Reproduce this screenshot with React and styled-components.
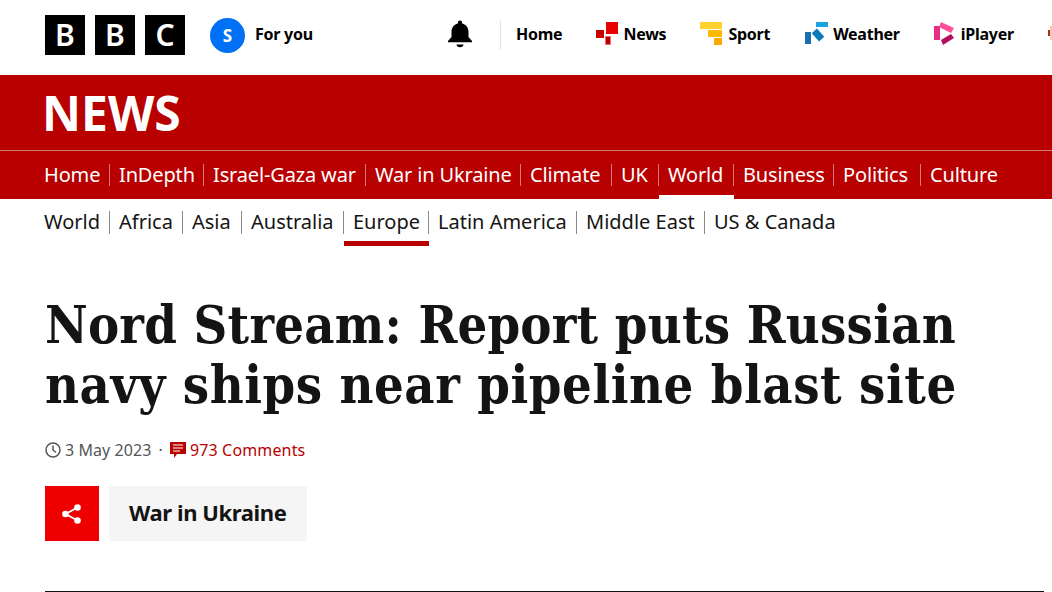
import React from 'react';
import styled, { createGlobalStyle } from 'styled-components';

const Global = createGlobalStyle`
  html, body { margin: 0; padding: 0; background: #fff; overflow: hidden; }
  body { width: 1052px; height: 592px; font-family: "Noto Sans", sans-serif; color: #141414; }
  * { box-sizing: border-box; }
`;
const Page = styled.div`width: 1052px; height: 592px; overflow: hidden;`;
const TopBar = styled.header`
  height: 75px; display: flex; align-items: center; padding: 0 0 5px 45px; white-space: nowrap; overflow: hidden;
`;
const Logo = styled.div`display: flex; gap: 10px;`;
const LogoBlock = styled.span`
  width: 40px; height: 40px; background: #000; color: #fff; display: flex; align-items: center; justify-content: center;
  font: 600 30px/1 "Noto Sans", sans-serif;
`;
const Account = styled.div`display: flex; align-items: center; gap: 10px; margin-left: 25px; width: 237px; flex: none;`;
const Avatar = styled.span`
  width: 35px; height: 35px; border-radius: 50%; background: #0071f5; color: #fff; display: flex; align-items: center; justify-content: center;
  font-weight: 700; font-size: 17px;
`;
const TopLabel = styled.span`font-weight: 700; font-size: 16px; color: #000; letter-spacing: -0.25px; margin-bottom: 3px;`;
const Bell = styled.div`display: flex; width: 26px; flex: none; margin-bottom: 2px;`;
const TopDivider = styled.span`width: 1px; height: 30px; background: #e3e3e3; margin: 0 15px 0 27px; flex: none;`;
const TopItem = styled.div`display: flex; align-items: center; gap: ${p => p.$inner}px; margin-right: ${p => p.$gap}px; flex: none;`;
const IconSlot = styled.span`display: flex; margin-bottom: 3px;`;

const Masthead = styled.div`background: #b80000; height: 124px; display: flex; flex-direction: column;`;
const Brand = styled.div`
  height: 76px; padding: 0 0 0 42px; border-bottom: 1px solid #d97a7a; display: flex; align-items: center; color: #fff;
  font-weight: 700; font-size: 48px; line-height: 1;
`;
const Nav = styled.nav`display: flex; flex: 1; padding-left: 35px; align-items: stretch;`;
const NavCell = styled.div`
  position: relative; display: flex; align-items: center; padding: 0 0 2px 9px; width: ${p => p.$w}px; color: #fff; font-size: 20px; letter-spacing: -0.15px; white-space: nowrap; flex: none;
  &::after {
    content: ""; display: ${p => p.$last ? 'none' : 'block'}; position: absolute; right: 0; top: 13px; height: 22px; width: 1px; background: #d97a7a;
  }
  ${p => p.$active && `&::before { content: ""; position: absolute; left: 0; right: 0; bottom: 0; height: 4px; background: #fff; }`}
`;
const SubNav = styled.nav`display: flex; height: 47px; padding-left: 35px; align-items: stretch;`;
const SubCell = styled.div`
  position: relative; display: flex; align-items: center; padding: 0 0 2px 9px; width: ${p => p.$w}px; color: #141414; font-size: 20px; white-space: nowrap; flex: none;
  &::after {
    content: ""; display: ${p => p.$last ? 'none' : 'block'}; position: absolute; right: 0; top: 12px; height: 23px; width: 1px; background: #8a8a8a;
  }
  ${p => p.$active && `&::before { content: ""; position: absolute; left: 0; right: 0; bottom: 0; height: 5px; background: #b80000; }`}
`;
const Article = styled.main`padding: 49px 8px 0 45px;`;
const Headline = styled.h1`
  margin: 0; font-family: "DejaVu Serif Condensed", "DejaVu Serif", serif; font-stretch: condensed; font-weight: 700; font-size: 52px; line-height: 60px; color: #141414; white-space: nowrap;
`;
const HeadlineLine = styled.span`display: block; letter-spacing: ${p => p.$track}px;`;
const Meta = styled.div`display: flex; align-items: center; margin-top: 23px; font-size: 16px; color: #545658; height: 24px; letter-spacing: 0.08px;`;
const MetaClock = styled.span`display: flex; margin-right: 4px;`;
const Dot = styled.span`margin: 0 7px;`;
const Comments = styled.span`display: flex; align-items: center; gap: 4px; color: #b80000; letter-spacing: 0.15px;`;
const Actions = styled.div`display: flex; gap: 10px; margin-top: 24px;`;
const ShareButton = styled.div`width: 54px; height: 55px; background: #ee0000; display: flex; align-items: center; justify-content: center;`;
const Tag = styled.div`height: 55px; padding: 0 20px 3px; width: 198px; background: #f5f5f5; display: flex; align-items: center; font-weight: 700; font-size: 22px; color: #141414; letter-spacing: -0.4px; white-space: nowrap;`;
const Rule = styled.hr`border: 0; height: 1px; background: #141414; margin: 50px 0 0;`;

const Ico = styled.svg`display: block; flex: none;`;

const NewsIcon = () => (
  <Ico width="22" height="24" viewBox="0 0 22 24">
    <rect x="10" y="0" width="12" height="12" fill="#e60000" />
    <rect x="0" y="8" width="8" height="8" fill="#c80000" />
    <rect x="9" y="14" width="6" height="9" fill="#f07070" />
    <rect x="10" y="15" width="4" height="7" fill="#b80000" />
  </Ico>
);
const SportIcon = () => (
  <Ico width="22" height="24" viewBox="0 0 22 24">
    <rect x="0" y="0" width="22" height="7" fill="#ffd230" />
    <rect x="8" y="8" width="14" height="7" fill="#ffb900" />
    <rect x="14" y="16" width="8" height="7" fill="#ffa800" />
  </Ico>
);
const WeatherIcon = () => (
  <Ico width="23" height="24" viewBox="0 0 23 24">
    <rect x="11" y="0" width="12" height="5" fill="#1aa3e0" />
    <rect x="9.500" y="7.500" width="7" height="11" fill="#0a7cb8" transform="rotate(-42 13 13)" />
    <rect x="0" y="10" width="6" height="12" fill="#1a6fb0" />
  </Ico>
);
const PlayerIcon = () => (
  <Ico width="20" height="24" viewBox="0 0 20 24">
    <rect x="0" y="4" width="6" height="14" fill="#e62e84" />
    <path d="M7 0 L20 6 L17 11 L5 5 Z" fill="#ff4f9a" />
    <path d="M7 18 L17 12 L20 16 L9 23 Z" fill="#b30f63" />
  </Ico>
);
const SoundsIcon = () => (
  <Ico width="22" height="24" viewBox="0 0 22 24">
    <rect x="0" y="8" width="2" height="6" fill="#a8300c" />
    <rect x="2" y="4" width="2" height="14" fill="#f5c9b5" />
  </Ico>
);
const BellIcon = () => (
  <Ico width="26" height="28" viewBox="0 0 26 28">
    <path d="M13 0.5a2.2 2.2 0 0 1 2.2 2.2v.9c4 1 6.3 4.3 6.3 8.4v5l3.5 4v1.3H1V21l3.5-4v-5c0-4.100 2.300-7.400 6.300-8.400v-.9A2.200 2.200 0 0 1 13 .5Z" fill="#000" />
    <path d="M9.500 24.500h7c0 1.500-1.500 2.800-3.500 2.800s-3.500-1.300-3.500-2.800Z" fill="#000" />
  </Ico>
);

const nav = [
  ['Home', 75], ['InDepth', 94], ['Israel-Gaza war', 162], ['War in Ukraine', 155], ['Climate', 91],
  ['UK', 47], ['World', 75], ['Business', 100], ['Politics', 87], ['Culture', 90],
];
const sub = [
  ['World', 75], ['Africa', 73], ['Asia', 59], ['Australia', 102], ['Europe', 85],
  ['Latin America', 148], ['Middle East', 128], ['US & Canada', 140],
];

export default function App() {
  return (
    <Page>
      <Global />
      <TopBar>
        <Logo>
          <LogoBlock>B</LogoBlock>
          <LogoBlock>B</LogoBlock>
          <LogoBlock>C</LogoBlock>
        </Logo>
        <Account>
          <Avatar>S</Avatar>
          <TopLabel>For you</TopLabel>
        </Account>
        <Bell><BellIcon /></Bell>
        <TopDivider />
        <TopItem $inner={5} $gap={34}><TopLabel>Home</TopLabel></TopItem>
        <TopItem $inner={5} $gap={34}><IconSlot><NewsIcon /></IconSlot><TopLabel>News</TopLabel></TopItem>
        <TopItem $inner={6} $gap={35}><IconSlot><SportIcon /></IconSlot><TopLabel>Sport</TopLabel></TopItem>
        <TopItem $inner={5} $gap={34}><IconSlot><WeatherIcon /></IconSlot><TopLabel>Weather</TopLabel></TopItem>
        <TopItem $inner={7} $gap={34}><IconSlot><PlayerIcon /></IconSlot><TopLabel>iPlayer</TopLabel></TopItem>
        <TopItem $inner={5} $gap={0}><IconSlot><SoundsIcon /></IconSlot></TopItem>
      </TopBar>
      <Masthead>
        <Brand>NEWS</Brand>
        <Nav>
          {nav.map(([n, w], i) => <NavCell key={n} $w={w} $active={n === 'World'} $last={i === nav.length - 1}>{n}</NavCell>)}
        </Nav>
      </Masthead>
      <SubNav>
        {sub.map(([n, w], i) => <SubCell key={n} $w={w} $active={n === 'Europe'} $last={i === sub.length - 1}>{n}</SubCell>)}
      </SubNav>
      <Article>
        <Headline>
          <HeadlineLine $track={0.2}>Nord Stream: Report puts Russian</HeadlineLine>
          <HeadlineLine $track={0.55}>navy ships near pipeline blast site</HeadlineLine>
        </Headline>
        <Meta>
          <MetaClock>
            <Ico width="16" height="16" viewBox="0 0 16 16" fill="none" stroke="#545658" strokeWidth="1.5">
              <circle cx="8" cy="8" r="7" />
              <path d="M8 3.500V8l3 2.500" />
            </Ico>
          </MetaClock>
          3 May 2023
          <Dot>·</Dot>
          <Comments>
            <Ico width="16" height="18" viewBox="0 0 16 18">
              <path d="M0 1h16v12H7l-3 4v-4H0Z" fill="#b80000" />
              <path d="M3 4h10M3 7h10M3 10h7" stroke="#fff" strokeWidth="1.200" />
            </Ico>
            973 Comments
          </Comments>
        </Meta>
        <Actions>
          <ShareButton>
            <Ico width="20" height="20" viewBox="0 0 20 20" fill="#fff">
              <circle cx="15.500" cy="3.500" r="3.300" />
              <circle cx="15.500" cy="16.500" r="3.300" />
              <circle cx="3.500" cy="10" r="3.300" />
              <path d="M3.500 10 15.500 3.500M3.500 10l12 6.500" stroke="#fff" strokeWidth="1.800" />
            </Ico>
          </ShareButton>
          <Tag>War in Ukraine</Tag>
        </Actions>
        <Rule />
      </Article>
    </Page>
  );
}
